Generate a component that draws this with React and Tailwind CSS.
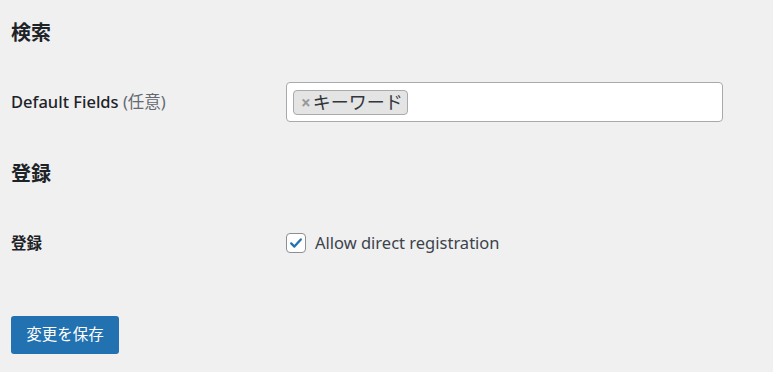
export default function App() {
  return (
    <div
      className="min-h-screen bg-[#f0f0f1] text-[#1d2327] px-[11px] pt-[19px]"
      style={{ fontFamily: '"Noto Sans", "Noto Sans CJK JP", sans-serif' }}
    >
      <h2 className="text-[20px] font-bold leading-[28px]">検索</h2>

      <div className="flex items-center mt-[35px]">
        <div className="w-[275px] text-[16.5px] font-medium">
          Default Fields <span className="font-normal text-[#646970]">(任意)</span>
        </div>
        <div className="w-[437px] h-[40px] bg-white border border-[#a7aaad] rounded-[4px] flex items-center px-[6px]">
          <span className="flex items-center h-[25px] bg-[#e4e4e4] border border-[#aaa] rounded-[4px] pl-[7px] pr-[4px] text-[18px] leading-none text-[#32373c]">
            <span className="text-[#999] font-bold text-[17px] mr-[2px]">×</span>
            キーワード
          </span>
        </div>
      </div>

      <h2 className="text-[20px] font-bold leading-[28px] mt-[38px]">登録</h2>

      <div className="flex items-center mt-[43px]">
        <div className="w-[275px] text-[15.5px] font-bold">登録</div>
        <label className="flex items-center gap-[9px] text-[16.5px] text-[#3c434a]">
          <span className="w-[20px] h-[20px] bg-white border border-[#8c8f94] rounded-[4px] flex items-center justify-center">
            <svg width="16" height="16" viewBox="0 0 20 20">
              <path d="M4 10.5l4 4 8-9" fill="none" stroke="#2271b1" strokeWidth="2.8" strokeLinecap="round" strokeLinejoin="round" />
            </svg>
          </span>
          Allow direct registration
        </label>
      </div>

      <button className="mt-[60px] h-[38px] w-[108px] bg-[#2271b1] text-white text-[15.5px] rounded-[3px]">
        変更を保存
      </button>
    </div>
  );
}
